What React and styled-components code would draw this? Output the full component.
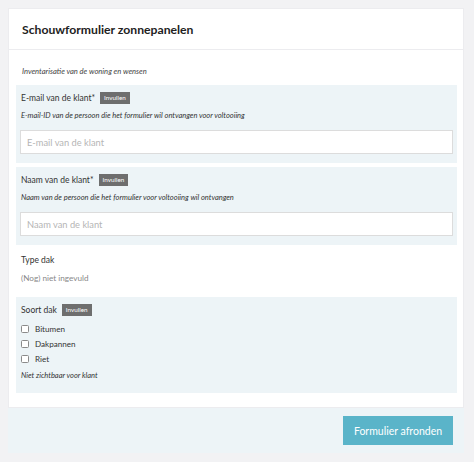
import React from "react";
import styled, { createGlobalStyle } from "styled-components";

const GlobalStyle = createGlobalStyle`
	html, body {
		margin: 0;
		padding: 0;
		background: #f2f2f4;
		font-family: Lato, "Open Sans", sans-serif;
		color: #333;
	}
	* {
		box-sizing: border-box;
	}
`;

const Page = styled.div`
	width: 474px;
	height: 462px;
	padding: 8px 10px 10px 8px;
	background: #f2f2f4;
`;
const Card = styled.div`
	background: #fff;
	border: 1px solid #ececef;
`;
const Header = styled.div`
	height: 41px;
	display: flex;
	align-items: center;
	padding: 0 13px;
	border-bottom: 1px solid #ececef;
`;
const Title = styled.h1`
	margin: 0;
	font-size: 12.2px;
	font-weight: 700;
	color: #222;
`;
const Body = styled.div`
	padding: 14px 6px 14px 7px;
`;
const Intro = styled.p`
	margin: 0 0 7px 6px;
	font-size: 7.6px;
	font-style: italic;
	line-height: 14px;
	color: #444;
`;
const Section = styled.div`
	background: ${(p) => (p.$plain ? "#fff" : "#edf4f7")};
	padding: ${(p) => (p.$plain ? "4px 4px 9px" : "6px 4px 9px")};
	margin-bottom: 4px;
	&:last-child {
		margin-bottom: 0;
		padding-bottom: 11px;
	}
`;
const LabelRow = styled.div`
	display: flex;
	align-items: center;
	gap: 5px;
	height: 14px;
	padding-left: 1px;
`;
const Label = styled.span`
	font-size: 8.5px;
	color: #333;
`;
const Badge = styled.span`
	background: #6e6e6e;
	color: #fff;
	font-size: 6.3px;
	padding: 0 4px;
	height: 12px;
	line-height: 12px;
`;
const Hint = styled.p`
	margin: 5px 0 0 1px;
	font-size: 7.5px;
	font-style: italic;
	line-height: 12px;
	color: #333;
`;
const Input = styled.input`
	display: block;
	width: 100%;
	height: 24px;
	margin-top: 8px;
	border: 1px solid #dcdcdc;
	background: #fff;
	padding: 0 6px;
	font-family: Lato, sans-serif;
	font-size: 9.3px;
	color: #333;
	outline: none;
	&::placeholder {
		color: #b5b5b5;
	}
`;
const Value = styled.p`
	margin: 5px 0 0 1px;
	font-size: 8.2px;
	line-height: 12px;
	color: #888;
`;
const Options = styled.div`
	display: flex;
	flex-direction: column;
	gap: 3px;
	margin-top: 6px;
	padding-left: 1px;
`;
const Option = styled.label`
	display: flex;
	align-items: center;
	gap: 6px;
	height: 12px;
	font-size: 8.1px;
	color: #333;
`;
const Box = styled.span`
	width: 8px;
	height: 8px;
	border: 1px solid #8a8a8a;
	border-radius: 1.5px;
	background: #fff;
`;
const Note = styled.p`
	margin: 5px 0 0 1px;
	font-size: 7.5px;
	font-style: italic;
	line-height: 12px;
	color: #333;
`;
const Footer = styled.div`
	display: flex;
	justify-content: flex-end;
	padding: 8px 11px 8px 0;
	background: #edf4f7;
`;
const Button = styled.button`
	width: 110px;
	height: 29px;
	border: none;
	background: #5ab4c9;
	color: #fff;
	font-family: Lato, sans-serif;
	font-size: 10.5px;
	cursor: pointer;
`;

const TextField = ({ label, hint, placeholder }) => (
	<Section>
		<LabelRow>
			<Label>{label}</Label>
			<Badge>Invullen</Badge>
		</LabelRow>
		<Hint>{hint}</Hint>
		<Input placeholder={placeholder} />
	</Section>
);

const App = () => (
	<Page>
		<GlobalStyle />
		<Card>
			<Header>
				<Title>Schouwformulier zonnepanelen</Title>
			</Header>
			<Body>
				<Intro>Inventarisatie van de woning en wensen</Intro>
				<TextField
					label="E-mail van de klant*"
					hint="E-mail-ID van de persoon die het formulier wil ontvangen voor voltooiing"
					placeholder="E-mail van de klant"
				/>
				<TextField
					label="Naam van de klant*"
					hint="Naam van de persoon die het formulier voor voltooiing wil ontvangen"
					placeholder="Naam van de klant"
				/>
				<Section $plain>
					<LabelRow>
						<Label>Type dak</Label>
					</LabelRow>
					<Value>(Nog) niet ingevuld</Value>
				</Section>
				<Section>
					<LabelRow>
						<Label>Soort dak</Label>
						<Badge>Invullen</Badge>
					</LabelRow>
					<Options>
						{["Bitumen", "Dakpannen", "Riet"].map((o) => (
							<Option key={o}>
								<Box />
								{o}
							</Option>
						))}
					</Options>
					<Note>Niet zichtbaar voor klant</Note>
				</Section>
			</Body>
		</Card>
		<Footer>
			<Button>Formulier afronden</Button>
		</Footer>
	</Page>
);

export default App;
